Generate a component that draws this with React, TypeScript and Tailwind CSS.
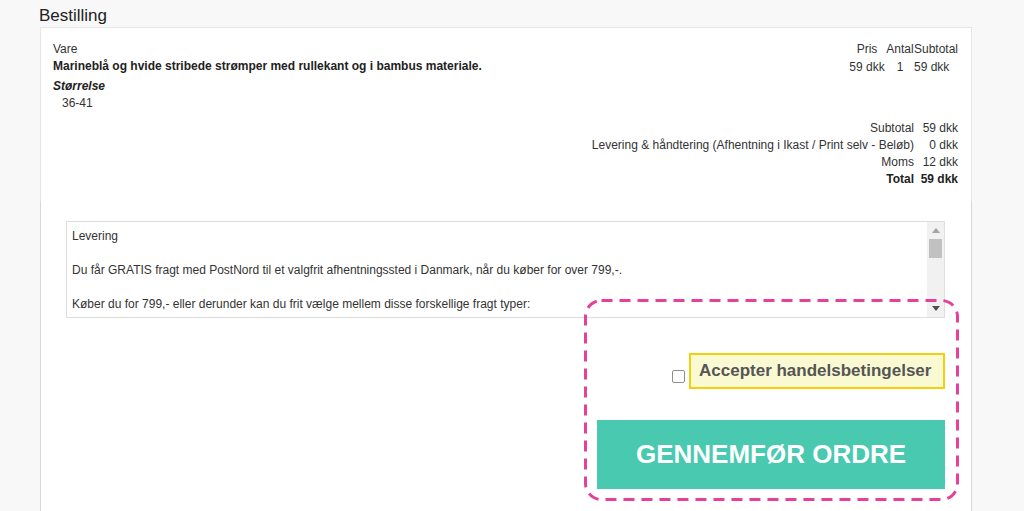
import React from "react";

export default function App() {
  return (
    <div className="relative min-h-[511px] overflow-hidden bg-[#f8f8f8] font-['Liberation_Sans',Arial,sans-serif] text-[12px] text-[#333]">
      <div className="ml-[39px] w-[933px] pt-[6px]">
        <h1 className="text-[17px] leading-[20px] text-[#222]">Bestilling</h1>
        <div className="ml-px mt-[1px] w-[932px] border-x border-t border-[#e6e6e6] bg-white">
          {/* upper section */}
          <div className="pl-[12px] pr-[13px] pt-[13px] pb-[13px]">
            <div className="flex justify-between">
              <div className="leading-[17px]">
                <div>Vare</div>
                <div className="font-bold text-[#222]">
                  Marineblå og hvide stribede strømper med rullekant og i bambus materiale.
                </div>
                <div className="mt-[3px] font-bold italic text-[#222]">Størrelse</div>
                <div className="pl-[9px]">36-41</div>
              </div>
              <div className="leading-[17px]">
                <div className="flex">
                  <div className="w-[38px] text-center">Pris</div>
                  <div className="w-[28px] text-center">Antal</div>
                  <div className="w-[44px] text-left">Subtotal</div>
                </div>
                <div className="mt-[1px] flex">
                  <div className="w-[38px] text-center">59 dkk</div>
                  <div className="w-[28px] text-center">1</div>
                  <div className="w-[44px] text-left">59 dkk</div>
                </div>
              </div>
            </div>
            <div className="mt-[8px] flex justify-end">
              <div className="grid grid-cols-[auto_44px] leading-[17px]">
                <div className="text-right">Subtotal</div>
                <div className="text-right">59 dkk</div>
                <div className="text-right">Levering &amp; håndtering (Afhentning i Ikast / Print selv - Beløb)</div>
                <div className="text-right">0 dkk</div>
                <div className="text-right">Moms</div>
                <div className="text-right">12 dkk</div>
                <div className="text-right font-bold text-[#222]">Total</div>
                <div className="text-right font-bold text-[#222]">59 dkk</div>
              </div>
            </div>
          </div>

          {/* lower section */}
          <div className="-mx-px border-x border-[#d9d9d9] pb-[40px] pt-[20px]">
            <div className="ml-[25px] flex h-[97px] w-[879px] overflow-hidden border border-[#dedede] bg-white">
              <div className="flex-1 overflow-hidden pl-[5px] pt-[6px] leading-[17px] text-[#333]">
                <p className="mb-[17px]">Levering</p>
                <p className="mb-[17px]">
                  Du får GRATIS fragt med PostNord til et valgfrit afhentningssted i Danmark, når du køber for over 799,-.
                </p>
                <p className="mb-[17px]">
                  Køber du for 799,- eller derunder kan du frit vælge mellem disse forskellige fragt typer:
                </p>
              </div>
              <div className="flex w-[17px] flex-col bg-[#f1f1f1]">
                <div className="flex h-[17px] items-center justify-center">
                  <svg width="8" height="5" viewBox="0 0 8 5">
                    <polygon points="0,5 8,5 4,0" fill="#a3a3a3" />
                  </svg>
                </div>
                <div className="mx-[2px] h-[19px] bg-[#c1c1c1]" />
                <div className="flex-1" />
                <div className="flex h-[17px] items-center justify-center">
                  <svg width="8" height="5" viewBox="0 0 8 5">
                    <polygon points="0,0 8,0 4,5" fill="#505050" />
                  </svg>
                </div>
              </div>
            </div>

            <div className="mr-[26px] mt-[35px] flex items-start justify-end">
              <div className="mt-[17px] h-[13px] w-[13px] rounded-[2px] border border-[#8f8f8f] bg-white" />
              <div className="ml-[4px] flex h-[36px] w-[256px] items-center border-2 border-[#f5cf0c] bg-[#fafad2] pl-[8px] text-[17px] font-bold text-[#555]">
                Accepter handelsbetingelser
              </div>
            </div>

            <div className="mr-[26px] mt-[31px] flex justify-end">
              <button className="flex h-[69px] w-[348px] items-center justify-center bg-[#48c9b0] text-[26px] font-bold text-white">
                GENNEMFØR ORDRE
              </button>
            </div>
          </div>
        </div>
      </div>

      {/* annotation overlay */}
      <svg
        className="pointer-events-none absolute left-[583px] top-[298px]"
        width="378"
        height="205"
        viewBox="0 0 378 205"
      >
        <rect
          x="2.5"
          y="2.5"
          width="372"
          height="199"
          rx="16"
          ry="16"
          fill="none"
          stroke="#e6409b"
          strokeWidth="3"
          strokeDasharray="11 7"
        />
      </svg>
    </div>
  );
}
